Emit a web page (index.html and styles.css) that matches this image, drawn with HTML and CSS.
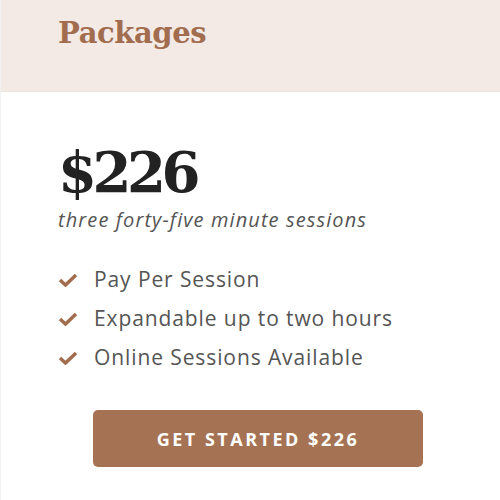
FILE: index.html
```html
<!DOCTYPE html>
<html lang="en">
<head>
  <meta charset="UTF-8">
  <title>Packages</title>
  <link rel="stylesheet" href="styles.css">
</head>
<body>
  <div class="card">
    <div class="card-head">
      <h2 class="title">Packages</h2>
    </div>

    <div class="card-body">
      <div class="price">$226</div>
      <div class="note">three forty-five minute sessions</div>

      <ul class="features">
        <li>
          <svg class="check" viewBox="0 0 20 14"><path d="M2 7 L7.5 12 L18 2" /></svg>
          Pay Per Session
        </li>
        <li>
          <svg class="check" viewBox="0 0 20 14"><path d="M2 7 L7.5 12 L18 2" /></svg>
          Expandable up to two hours
        </li>
        <li>
          <svg class="check" viewBox="0 0 20 14"><path d="M2 7 L7.5 12 L18 2" /></svg>
          Online Sessions Available
        </li>
      </ul>

      <div class="actions">
        <button class="btn">Get Started $226</button>
      </div>
    </div>
  </div>
</body>
</html>
```

FILE: styles.css
```css
* { box-sizing: border-box; margin: 0; padding: 0; }

body {
  font-family: 'Open Sans', sans-serif;
  background: #fff;
  width: 500px;
  height: 500px;
  overflow: hidden;
}

.card {
  height: 500px;
  border-left: 1px solid #f1f1f1;
}

.card-head {
  background: #f3eae5;
  height: 92px;
  padding: 16px 0 0 57px;
  border-bottom: 1px solid #efe3dc;
}

.title {
  font-family: 'DejaVu Serif', serif;
  font-weight: bold;
  font-size: 29px;
  color: #a26d4f;
  letter-spacing: -0.4px;
}

.card-body {
  padding: 48px 0 0 57px;
}

.price {
  font-family: 'DejaVu Serif', serif;
  font-weight: bold;
  font-size: 56px;
  line-height: 64px;
  color: #222;
  letter-spacing: -4.5px;
}

.note {
  font-style: italic;
  font-size: 20px;
  color: #555;
  margin-top: 2px;
  letter-spacing: 1.1px;
}

.features {
  list-style: none;
  margin-top: 27px;
}

.features li {
  display: flex;
  align-items: center;
  gap: 16px;
  font-size: 21px;
  line-height: 39px;
  color: #555;
  letter-spacing: 0.9px;
}

.check {
  width: 20px;
  height: 14px;
  fill: none;
  stroke: #a26d4f;
  stroke-width: 3.5;
}

.actions {
  margin-top: 33px;
  padding-left: 35px;
}

.btn {
  width: 330px;
  height: 57px;
  background: #a57354;
  border: none;
  border-radius: 5px;
  color: #fff;
  font-family: 'Open Sans', sans-serif;
  font-weight: bold;
  font-size: 18px;
  letter-spacing: 2.5px;
  text-transform: uppercase;
}
```
